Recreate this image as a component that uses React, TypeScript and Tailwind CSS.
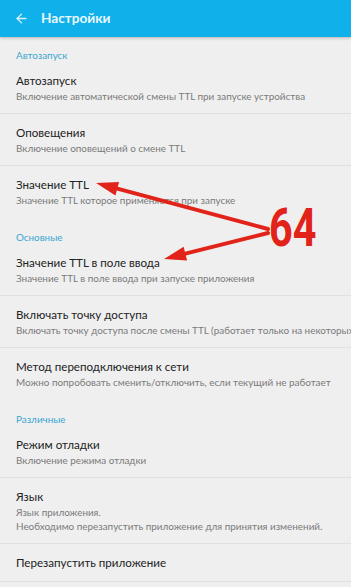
import { ArrowLeft } from "lucide-react";

type Item = { title: string; lines?: string[]; divider?: boolean };
type Section = { label: string; items: Item[] };

const sections: Section[] = [
  {
    label: "Автозапуск",
    items: [
      { title: "Автозапуск", lines: ["Включение автоматической смены TTL при запуске устройства"], divider: true },
      { title: "Оповещения", lines: ["Включение оповещений о смене TTL"], divider: true },
      { title: "Значение TTL", lines: ["Значение TTL которое применяется при запуске"] },
    ],
  },
  {
    label: "Основные",
    items: [
      { title: "Значение TTL в поле ввода", lines: ["Значение TTL в поле ввода при запуске приложения"], divider: true },
      { title: "Включать точку доступа", lines: ["Включать точку доступа после смены TTL (работает только на некоторых устройствах)"], divider: true },
      { title: "Метод переподключения к сети", lines: ["Можно попробовать сменить/отключить, если текущий не работает"] },
    ],
  },
  {
    label: "Различные",
    items: [
      { title: "Режим отладки", lines: ["Включение режима отладки"], divider: true },
      {
        title: "Язык",
        lines: ["Язык приложения.", "Необходимо перезапустить приложение для принятия изменений."],
        divider: true,
      },
      { title: "Перезапустить приложение", divider: true },
    ],
  },
];

function Row({ item }: { item: Item }) {
  return (
    <div className={`pl-4 pt-[11px] pb-[10px] overflow-hidden ${item.divider ? "border-b border-[#e0e0e0]" : ""}`}>
      <div className="text-[11.6px] leading-[16px] text-[#222] whitespace-nowrap">{item.title}</div>
      {item.lines?.map((l) => (
        <div key={l} className="text-[9.9px] leading-[14px] text-[#7a7a7a] whitespace-nowrap">
          {l}
        </div>
      ))}
    </div>
  );
}

function Arrow({ x1, y1, x2, y2 }: { x1: number; y1: number; x2: number; y2: number }) {
  const a = Math.atan2(y2 - y1, x2 - x1);
  const len = 22;
  const w = 7;
  const bx = x2 - len * Math.cos(a);
  const by = y2 - len * Math.sin(a);
  const px = -Math.sin(a) * w;
  const py = Math.cos(a) * w;
  return (
    <g>
      <line x1={x1} y1={y1} x2={bx} y2={by} stroke="#e2231a" strokeWidth={4} strokeLinecap="round" />
      <polygon points={`${x2},${y2} ${bx + px},${by + py} ${bx - px},${by - py}`} fill="#e2231a" />
    </g>
  );
}

export default function App() {
  return (
    <div
      className="relative w-[351px] h-[587px] overflow-hidden bg-[#efefef]"
      style={{ fontFamily: "Lato, 'Open Sans', sans-serif" }}
    >
      <div className="h-[37px] bg-[#10b0ea] flex items-center shadow-[0_1px_3px_rgba(0,0,0,0.25)] relative z-10">
        <ArrowLeft size={15} strokeWidth={2.2} className="ml-[14px] text-[#d8f2fc]" />
        <span className="ml-[12px] text-[13.6px] font-bold text-[#e8f8fe]">Настройки</span>
      </div>

      {sections.map((s, i) => (
        <div key={s.label}>
          <div className={`pl-4 text-[9.9px] leading-[14px] text-[#3ba6d2] ${i === 0 ? "pt-[11px]" : "pt-[13px]"}`}>
            {s.label}
          </div>
          {s.items.map((it) => (
            <Row key={it.title} item={it} />
          ))}
        </div>
      ))}

      <span
        className="absolute left-[269px] top-[198px] text-[53px] leading-[60px] font-bold text-[#e2231a] scale-x-[0.78] origin-left"
        style={{ fontFamily: "Roboto, 'Liberation Sans', sans-serif" }}
      >
        64
      </span>

      <svg className="absolute inset-0 pointer-events-none" width={351} height={587}>
        <Arrow x1={268} y1={229} x2={96} y2={183} />
        <Arrow x1={268} y1={233} x2={164} y2={259} />
      </svg>
    </div>
  );
}
